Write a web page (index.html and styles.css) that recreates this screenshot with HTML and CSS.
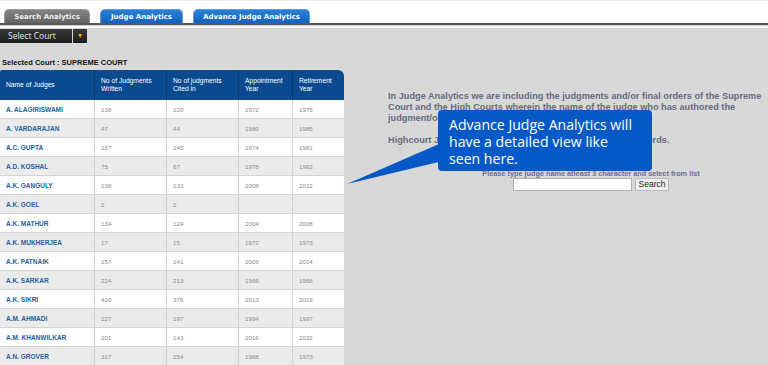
FILE: index.html
```html
<!DOCTYPE html>
<html lang="en">
<head>
    <meta charset="UTF-8">
    <title>Judge Analytics</title>
    <link rel="stylesheet" href="styles.css">
</head>
<body>
    <header class="topbar">
        <nav class="tabs">
            <a class="tab tab-grey" href="#">Search Analytics</a>
            <a class="tab tab-blue" href="#">Judge Analytics</a>
            <a class="tab tab-blue tab-wide" href="#">Advance Judge Analytics</a>
        </nav>
    </header>

    <div class="main">
        <div class="left">
            <div class="court-select">
                <span class="court-label">Select Court</span>
                <span class="court-arrow">&#9660;</span>
            </div>
            <p class="selected-court">Selected Court : SUPREME COURT</p>

            <table class="judges">
                <thead>
                    <tr>
                        <th class="c1">Name of Judges</th>
                        <th class="c2">No of Judgments<br>Written</th>
                        <th class="c3">No of judgments<br>Cited in</th>
                        <th class="c4">Appointment<br>Year</th>
                        <th class="c5">Retirement<br>Year</th>
                    </tr>
                </thead>
                <tbody>
                    <tr><td><a href="#">A. ALAGIRISWAMI</a></td><td>138</td><td>120</td><td>1972</td><td>1975</td></tr>
                    <tr><td><a href="#">A. VARDARAJAN</a></td><td>47</td><td>44</td><td>1980</td><td>1985</td></tr>
                    <tr><td><a href="#">A.C. GUPTA</a></td><td>157</td><td>145</td><td>1974</td><td>1981</td></tr>
                    <tr><td><a href="#">A.D. KOSHAL</a></td><td>75</td><td>67</td><td>1978</td><td>1982</td></tr>
                    <tr><td><a href="#">A.K. GANGULY</a></td><td>138</td><td>133</td><td>2008</td><td>2012</td></tr>
                    <tr><td><a href="#">A.K. GOEL</a></td><td>2</td><td>2</td><td></td><td></td></tr>
                    <tr><td><a href="#">A.K. MATHUR</a></td><td>134</td><td>124</td><td>2004</td><td>2008</td></tr>
                    <tr><td><a href="#">A.K. MUKHERJEA</a></td><td>17</td><td>15</td><td>1972</td><td>1973</td></tr>
                    <tr><td><a href="#">A.K. PATNAIK</a></td><td>157</td><td>141</td><td>2009</td><td>2014</td></tr>
                    <tr><td><a href="#">A.K. SARKAR</a></td><td>224</td><td>213</td><td>1966</td><td>1966</td></tr>
                    <tr><td><a href="#">A.K. SIKRI</a></td><td>420</td><td>376</td><td>2013</td><td>2019</td></tr>
                    <tr><td><a href="#">A.M. AHMADI</a></td><td>227</td><td>197</td><td>1994</td><td>1997</td></tr>
                    <tr><td><a href="#">A.M. KHANWILKAR</a></td><td>201</td><td>143</td><td>2016</td><td>2022</td></tr>
                    <tr><td><a href="#">A.N. GROVER</a></td><td>317</td><td>254</td><td>1968</td><td>1973</td></tr>
                </tbody>
            </table>
        </div>

        <div class="right">
            <p class="intro">In Judge Analytics we are including the judgments and/or final orders of the Supreme Court and the High Courts wherein the name of the judge who has authored the judgment/order is available in our records.</p>
            <p class="intro">Highcourt Judge Analytics is available for judges in our records.</p>

            <form class="search">
                <p class="hint">Please type judge name atleast 3 character and select from list</p>
                <div class="search-row">
                    <input type="text" class="search-input">
                    <button type="button" class="search-btn">Search</button>
                </div>
            </form>
        </div>

        <!-- callout over the page -->
        <svg class="callout-tail" width="100" height="50" viewBox="0 0 100 50">
            <polygon points="92,2 100,18 0,42" fill="#0559c6"/>
        </svg>
        <div class="callout">Advance Judge Analytics will have a detailed view like seen here.</div>
    </div>
</body>
</html>
```

FILE: styles.css
```css
* {
    margin: 0;
    padding: 0;
    box-sizing: border-box;
}

body {
    font-family: Arial, 'Liberation Sans', sans-serif;
    background-color: #fff;
    height: 365px;
    overflow: hidden;
}

/* タブ */
.topbar {
    height: 28px;
    border-top: 1px solid #ececec;
    position: relative;
}

.topbar::after {
    content: '';
    position: absolute;
    left: 0;
    right: 0;
    top: 22px;
    height: 2px;
    background-color: #5a5a5a;
    border-bottom: 1px solid #d0d0d0;
}

.tabs {
    display: flex;
    gap: 10px;
    padding: 8px 0 0 4px;
}

.tab {
    display: block;
    height: 15px;
    line-height: 15px;
    text-align: center;
    font-family: Verdana, 'DejaVu Sans', sans-serif;
    font-weight: bold;
    font-size: 7px;
    text-decoration: none;
    border-radius: 5px 5px 0 0;
}

.tab-grey {
    width: 86px;
    color: #eee;
    background: linear-gradient(#838383, #616161);
    border: 1px solid #9a9a9a;
    border-bottom: none;
}

.tab-blue {
    width: 83px;
    color: #fff;
    background: linear-gradient(#2a7fd6, #0f62bd);
    border: 1px solid #5a9ce0;
    border-bottom: none;
}

.tab-wide {
    width: 117px;
}

/* メイン */
.main {
    display: flex;
    background-color: #d8d8d8;
    height: 337px;
    position: relative;
}

.left {
    width: 348px;
    padding-top: 1px;
}

.court-select {
    display: flex;
    height: 14px;
}

.court-label {
    width: 72px;
    background: linear-gradient(#3a3a3a, #1c1c1c);
    color: #e8e8e8;
    font-size: 8.5px;
    line-height: 14px;
    padding-left: 8px;
    font-family: 'Open Sans', sans-serif;
}

.court-arrow {
    width: 14px;
    margin-left: 1px;
    background: linear-gradient(#3a3a3a, #1c1c1c);
    color: #f0a000;
    font-size: 7px;
    line-height: 14px;
    text-align: center;
}

.selected-court {
    font-size: 7.5px;
    font-weight: bold;
    color: #111;
    margin: 15px 0 0 2px;
    height: 12px;
}

.judges {
    width: 344px;
    border-collapse: separate;
    border-spacing: 0;
    font-size: 6.2px;
    table-layout: fixed;
}

.judges th {
    height: 30px;
    background-color: #0b4a8e;
    color: #fff;
    font-weight: normal;
    text-align: left;
    font-size: 6.7px;
    line-height: 8px;
    padding-left: 6px;
    border-left: 1px solid #093b72;
}

.judges th.c1 {
    border-left: none;
    border-top-left-radius: 2px;
}

.judges th.c5 {
    border-top-right-radius: 6px;
}

.c1 { width: 94px; }
.c2 { width: 72px; }
.c3 { width: 72px; }
.c4 { width: 54px; }
.c5 { width: 52px; }

.judges td {
    height: 19px;
    padding-left: 6px;
    color: #8a8a8a;
    border-left: 1px solid #d2d2da;
    border-bottom: 1px solid #d2d2da;
}

.judges td:first-child {
    border-left: none;
}

.judges tbody tr:nth-child(odd) td {
    background-color: #fff;
}

.judges tbody tr:nth-child(even) td {
    background-color: #ebebeb;
}

.judges a {
    color: #2261a0;
    font-weight: bold;
    font-size: 6.5px;
    text-decoration: none;
}

/* 右側 */
.right {
    padding: 63px 0 0 40px;
    width: 420px;
}

.intro {
    font-size: 9.2px;
    font-weight: bold;
    line-height: 11px;
    color: #666b82;
    margin-bottom: 11px;
    width: 378px;
}

.search {
    margin-left: 43px;
    text-align: center;
    width: 320px;
}

.hint {
    font-size: 7.3px;
    font-weight: bold;
    color: #6d7085;
    margin-top: 23px;
    line-height: 9px;
}

.search-row {
    display: flex;
    justify-content: center;
    gap: 3px;
}

.search-input {
    width: 119px;
    height: 13px;
    border: 1px solid #b0b0b0;
    background-color: #fff;
}

.search-btn {
    height: 13px;
    width: 34px;
    font-size: 8.5px;
    font-family: Arial, 'Liberation Sans', sans-serif;
    border: 1px solid #b8b8b8;
    background-color: #f0f0f0;
    color: #222;
    line-height: 11px;
}

/* 吹き出し */
.callout {
    position: absolute;
    left: 438px;
    top: 82px;
    width: 214px;
    height: 61px;
    padding: 6px 16px 0 11px;
    background-color: #0559c6;
    border-radius: 4px;
    color: #fff;
    font-family: 'Open Sans', sans-serif;
    font-size: 14.1px;
    line-height: 17px;
}

.callout-tail {
    position: absolute;
    left: 347px;
    top: 114px;
}
```
